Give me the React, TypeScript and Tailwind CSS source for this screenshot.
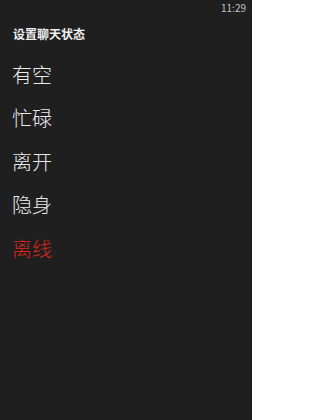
const statuses = [
  { label: "有空", active: false },
  { label: "忙碌", active: false },
  { label: "离开", active: false },
  { label: "隐身", active: false },
  { label: "离线", active: true },
];

export default function App() {
  return (
    <div className="h-[420px] w-[252px] bg-[#1f1f1f] font-['Segoe_UI','Noto_Sans_CJK_SC',sans-serif] text-white">
      <div className="flex h-[16px] items-center justify-end pr-[6px] text-[10px] leading-[16px] text-[#c4c4c4]">
        11:29
      </div>

      <div className="mt-[11.5px] pl-[13px] text-[12px] font-semibold leading-[12px] text-[#f0f0f0]">
        设置聊天状态
      </div>

      <ul className="mt-[13px] pl-[12px]">
        {statuses.map((item) => (
          <li
            key={item.label}
            className={`h-[43.5px] text-[20px] font-light leading-[43.5px] ${
              item.active ? "text-[#d9261c]" : "text-[#ececec]"
            }`}
          >
            {item.label}
          </li>
        ))}
      </ul>
    </div>
  );
}
